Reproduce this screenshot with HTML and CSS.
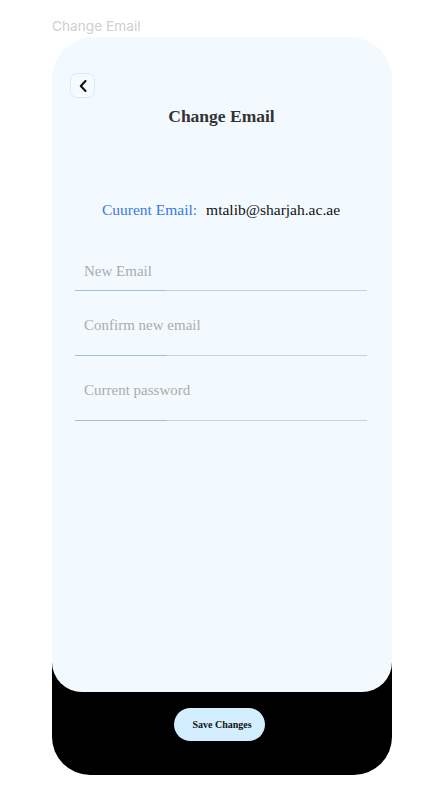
FILE: index.html
```html
<!DOCTYPE html>
<html>
<head>
<meta charset="utf-8">
<link rel="stylesheet" href="styles.css">
</head>
<body>
<div class="page-label">Change Email</div>
<div class="frame">
  <div class="panel">
    <button class="back" aria-label="Back">
      <svg width="8" height="12" viewBox="0 0 8 12"><path d="M6.5 1 L1.8 6 L6.5 11" fill="none" stroke="#111" stroke-width="2" stroke-linecap="round" stroke-linejoin="round"/></svg>
    </button>
    <h1 class="title">Change Email</h1>
    <div class="current">
      <span class="current-label">Cuurent Email:</span>
      <span class="current-value">mtalib@sharjah.ac.ae</span>
    </div>
    <div class="fields">
      <div class="field first">New Email</div>
      <div class="field">Confirm new email</div>
      <div class="field">Current password</div>
    </div>
  </div>
  <div class="footer">
    <button class="save">Save Changes</button>
  </div>
</div>
</body>
</html>
```

FILE: styles.css
```css
html, body {
  margin: 0;
  padding: 0;
  background: #ffffff;
}

body {
  font-family: "Liberation Serif", serif;
}

.page-label {
  font-family: "Inter", sans-serif;
  font-size: 13.7px;
  line-height: 17px;
  color: #d0d0d0;
  padding: 18px 0 0 52px;
  height: 19px;
}

.frame {
  margin-left: 52px;
  width: 340px;
  height: 738px;
  background: #000;
  border-radius: 60px 60px 38px 38px;
  display: flex;
  flex-direction: column;
}

.panel {
  height: 655px;
  box-sizing: border-box;
  background: #f3faff;
  border-radius: 42px 42px 30px 30px;
  padding: 36px 25px 0 23px;
  display: flex;
  flex-direction: column;
}

.back {
  width: 25px;
  height: 25px;
  margin-left: -5px;
  padding: 0;
  border: 1px solid #d3ecfb;
  border-radius: 7px;
  background: #f5fbff;
  display: flex;
  align-items: center;
  justify-content: center;
}

.title {
  margin: 8px 0 0 0;
  font-family: "Liberation Serif", serif;
  font-weight: bold;
  font-size: 17.5px;
  line-height: 20px;
  color: #333;
  text-align: center;
  padding-left: 1px;
}

.current {
  margin-top: 74px;
  display: flex;
  justify-content: center;
  gap: 9px;
  font-size: 15.5px;
  line-height: 20px;
  padding-left: 0;
}

.current-label {
  color: #3a78e0;
}

.current-value {
  color: #111;
}

.fields {
  margin-top: 41px;
  display: flex;
  flex-direction: column;
}

.field {
  padding: 24px 0 20px 9px;
  font-size: 15px;
  line-height: 20px;
  color: #ababab;
  border-style: solid;
  border-width: 0 0 1px 0;
  border-image: linear-gradient(to right, #a3bed2 0, #a3bed2 91px, #c2d3df 91px, #c2d3df 100%) 1;
}

.field.first {
  padding-top: 0;
  padding-bottom: 9px;
}

.footer {
  flex: 1;
  display: flex;
  justify-content: center;
  align-items: flex-start;
  padding-top: 16px;
}

.save {
  width: 91px;
  height: 33px;
  border: none;
  border-radius: 17px;
  background: #d3eeff;
  font-family: "Liberation Serif", serif;
  font-weight: bold;
  font-size: 10px;
  color: #111;
  padding: 0 0 0 5px;
  margin-left: -5px;
}
```
